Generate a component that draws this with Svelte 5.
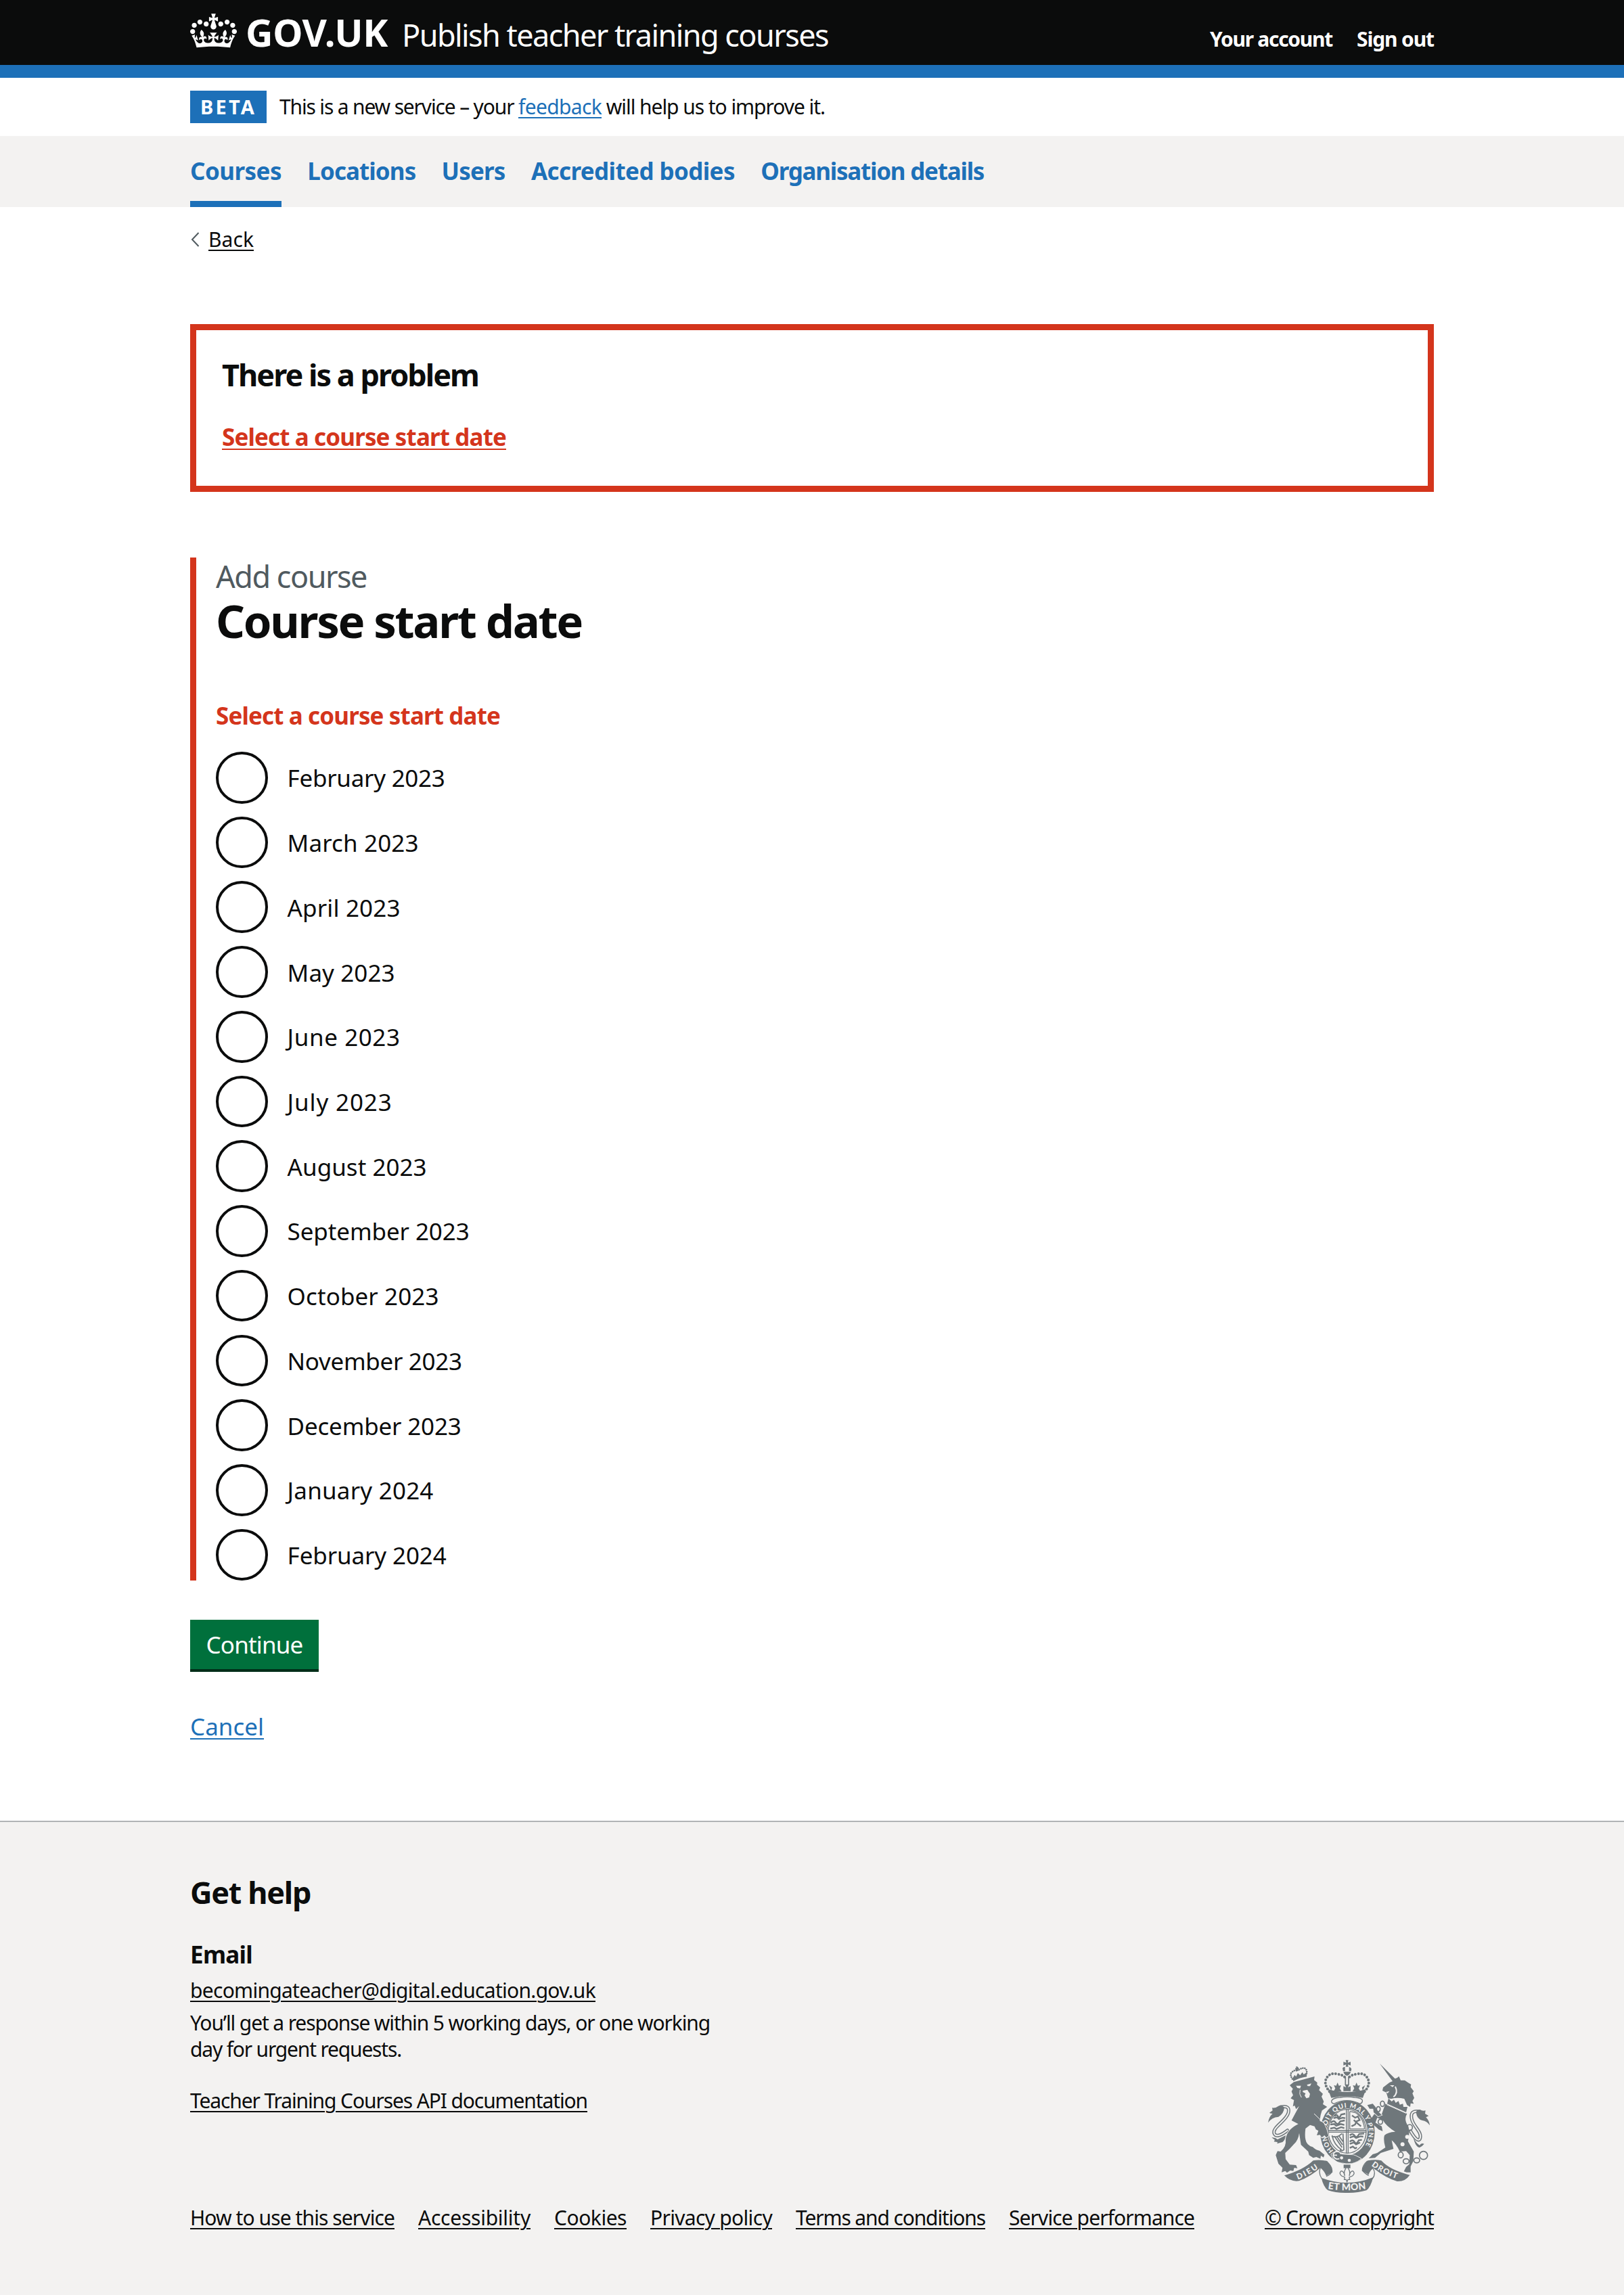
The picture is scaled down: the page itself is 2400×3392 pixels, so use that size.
<script>
  const navItems = [
    { label: 'Courses', width: 135, current: true },
    { label: 'Locations', width: 160 },
    { label: 'Users', width: 94 },
    { label: 'Accredited bodies', width: 301 },
    { label: 'Organisation details', width: 330 }
  ];

  const dates = [
    { label: 'February 2023', width: 233 },
    { label: 'March 2023', width: 194 },
    { label: 'April 2023', width: 167 },
    { label: 'May 2023', width: 159 },
    { label: 'June 2023', width: 167 },
    { label: 'July 2023', width: 155 },
    { label: 'August 2023', width: 206 },
    { label: 'September 2023', width: 269 },
    { label: 'October 2023', width: 224 },
    { label: 'November 2023', width: 258 },
    { label: 'December 2023', width: 257 },
    { label: 'January 2024', width: 216 },
    { label: 'February 2024', width: 235 }
  ];

  const footerLinks = [
    { label: 'How to use this service', width: 302 },
    { label: 'Accessibility', width: 166 },
    { label: 'Cookies', width: 107 },
    { label: 'Privacy policy', width: 180 },
    { label: 'Terms and conditions', width: 280 },
    { label: 'Service performance', width: 274 }
  ];

  // Tracks a line of text so that it occupies the given measure.
  function fit(node, width) {
    const natural = node.getBoundingClientRect().width;
    node.style.letterSpacing = `${(width - natural) / node.textContent.length}px`;
  }
</script>

<div class="page">
  <header class="header">
    <div class="container header-row">
      <svg class="crown" viewBox="0 0 132 97" aria-hidden="true">
        <path fill="#fff" fill-rule="evenodd" d="M25 30.2c3.5 1.5 7.7-.2 9.1-3.7 1.5-3.6-.2-7.8-3.9-9.2-3.6-1.4-7.6.3-9.1 3.9-1.4 3.5.3 7.5 3.9 9zM9 39.5c3.6 1.5 7.8-.2 9.2-3.7 1.5-3.6-.2-7.8-3.9-9.1-3.6-1.5-7.6.2-9.1 3.8-1.4 3.5.3 7.5 3.8 9zM4.4 57.2c3.5 1.5 7.7-.2 9.1-3.8 1.5-3.6-.2-7.7-3.9-9.1-3.5-1.5-7.6.3-9.1 3.8-1.4 3.5.3 7.6 3.9 9.1zm38.3-21.4c3.5 1.5 7.7-.2 9.1-3.8 1.5-3.6-.2-7.7-3.9-9.1-3.6-1.5-7.6.3-9.1 3.8-1.3 3.6.4 7.7 3.9 9.1zm64.4-5.6c-3.6 1.5-7.8-.2-9.1-3.7-1.5-3.6.2-7.8 3.8-9.2 3.6-1.4 7.7.3 9.2 3.9 1.3 3.5-.4 7.5-3.9 9zm15.9 9.3c-3.6 1.5-7.7-.2-9.1-3.7-1.5-3.6.2-7.8 3.7-9.1 3.6-1.5 7.7.2 9.2 3.8 1.5 3.5-.3 7.5-3.8 9zm4.7 17.7c-3.6 1.5-7.8-.2-9.2-3.8-1.5-3.6.2-7.7 3.9-9.1 3.6-1.5 7.7.3 9.2 3.8 1.3 3.5-.4 7.6-3.9 9.1zM89.3 35.8c-3.6 1.5-7.8-.2-9.2-3.8-1.4-3.6.2-7.7 3.9-9.1 3.6-1.5 7.7.3 9.2 3.8 1.4 3.6-.3 7.7-3.9 9.1zM69.7 17.7l8.9 4.7V9.3l-8.9 2.8c-.2-.3-.5-.6-.9-.9L72.4 0H59.6l3.5 11.2c-.3.3-.6.5-.9.9l-8.8-2.8v13.1l8.8-4.7c.3.3.6.7.9.9l-5 15.4v.1c-.2.8-.4 1.6-.4 2.4 0 4.1 3.1 7.5 7 8.1h.2c.3 0 .7.1 1 .1.4 0 .7 0 1-.1h.2c4-.6 7.1-4.1 7.1-8.1 0-.8-.1-1.7-.4-2.4V34l-5.1-15.4c.4-.2.7-.6 1-.9zM66 92.8c16.9 0 32.8 1.1 47.1 3.2 4-16.9 8.9-26.7 14-33.5l-9.6-3.4c1 4.9 1.1 7.2 0 10.2-1.5-1.4-3-4.3-4.2-8.7L108.6 76c2.8-2 5-3.2 7.5-3.3-4.4 9.4-10 11.9-13.6 11.2-4.3-.8-6.3-4.6-5.6-7.9 1-4.7 5.7-5.9 8-.5 4.3-8.7-3-11.4-7.6-8.8 7.1-7.2 7.9-13.5 2.1-21.1-8 6.1-8.1 12.3-4.5 20.8-4.7-5.4-12.1-2.5-9.5 6.2 3.4-5.2 7.9-2 7.2 3.1-.6 4.3-6.4 7.8-13.5 7.2-10.3-.9-10.9-8-11.2-13.8 2.5-.5 7.1 1.8 11 7.3L80.2 60c-4.1 4.4-8 5.3-12.3 5.4 1.4-4.4 8-11.6 8-11.6H55.5s6.4 7.2 7.9 11.6c-4.2-.1-8-1-12.3-5.4l1.4 16.4c3.9-5.5 8.5-7.7 10.9-7.3-.3 5.8-.9 12.8-11.1 13.8-7.2.6-12.9-2.9-13.5-7.2-.7-5 3.8-8.3 7.1-3.1 2.7-8.7-4.6-11.6-9.4-6.2 3.7-8.5 3.6-14.7-4.6-20.8-5.8 7.6-5 13.9 2.2 21.1-4.7-2.6-11.9.1-7.7 8.8 2.3-5.5 7.1-4.2 8.1.5.7 3.3-1.3 7.1-5.7 7.9-3.5.7-9-1.8-13.5-11.2 2.5.1 4.7 1.3 7.5 3.3l-4.7-15.4c-1.2 4.4-2.7 7.2-4.3 8.7-1.1-3-.9-5.3 0-10.2l-9.5 3.4c5 6.9 9.9 16.7 14 33.5 14.8-2.1 30.8-3.2 47.7-3.2z" />
      </svg>
      <span class="logotype" use:fit={210}>GOV.UK</span>
      <span class="product" use:fit={630}>Publish teacher training courses</span>
      <nav class="account">
        <a href="#account" use:fit={181}>Your account</a>
        <a href="#signout" use:fit={114}>Sign out</a>
      </nav>
    </div>
  </header>

  <div class="phase">
    <div class="container phase-row">
      <strong class="tag"><span use:fit={83}>BETA</span></strong>
      <p class="phase-text"><span use:fit={353}>This is a new service – your&nbsp;</span><a class="link blue" href="#feedback" use:fit={123}>feedback</a><span use:fit={330}>&nbsp;will help us to improve it.</span></p>
    </div>
  </div>

  <div class="nav">
    <nav class="container nav-row">
      {#each navItems as item}
        <a class="nav-link" class:current={item.current} href="#nav"><span use:fit={item.width}>{item.label}</span></a>
      {/each}
    </nav>
  </div>

  <main class="container main">
    <a class="back" href="#back">
      <svg class="chevron" viewBox="0 0 14 22" aria-hidden="true"><path d="M12.5 1 3 11l9.500 10" fill="none" stroke="#505a5f" stroke-width="2" /></svg>
      <span class="link" use:fit={67}>Back</span>
    </a>

    <section class="summary">
      <h2><span use:fit={379}>There is a problem</span></h2>
      <p><a class="link" href="#dates" use:fit={420}>Select a course start date</a></p>
    </section>

    <fieldset class="group">
      <p class="caption"><span use:fit={223}>Add course</span></p>
      <h1><span use:fit={541}>Course start date</span></h1>
      <p class="error"><span use:fit={420}>Select a course start date</span></p>
      <div class="radios" id="dates">
        {#each dates as date}
          <label class="radio">
            <input type="radio" name="start" />
            <span class="radio-label" use:fit={date.width}>{date.label}</span>
          </label>
        {/each}
      </div>
    </fieldset>

    <button class="button" type="button"><span use:fit={143}>Continue</span></button>
    <p class="cancel"><a class="link blue" href="#cancel" use:fit={109}>Cancel</a></p>
  </main>

  <footer class="footer">
    <div class="container footer-row">
      <div class="help">
        <h2><span use:fit={178}>Get help</span></h2>
        <h3><span use:fit={92}>Email</span></h3>
        <p class="mail"><a class="link" href="#mail" use:fit={599}>becomingateacher@digital.education.gov.uk</a></p>
        <p class="response">
          <span use:fit={768}>You’ll get a response within 5 working days, or one working</span><br />
          <span use:fit={312}>day for urgent requests.</span>
        </p>
        <p class="docs"><a class="link" href="#api" use:fit={587}>Teacher Training Courses API documentation</a></p>
        <nav class="meta">
          {#each footerLinks as item}
            <a class="link" href="#meta" use:fit={item.width}>{item.label}</a>
          {/each}
        </nav>
      </div>

      <div class="copyright">
        <svg class="arms" viewBox="57 60 750 600" aria-hidden="true">
          <defs>
            <path id="garter" d="M362 470A94 109 0 1 1 490 466" />
            <path id="dieu" d="M204 598Q262 576 312 534" />
            <path id="etmon" d="M337 639Q422 653 516 638" />
            <path id="droit" d="M530 536Q582 576 664 602" />
          </defs>

          <!-- tails -->
          <g fill="none" stroke-linecap="round">
            <path class="ink" stroke-width="15" d="M130 276Q170 268 162 302C152 340 86 368 100 396Q112 416 158 380" />
            <path class="paper" stroke-width="6" d="M130 276Q170 268 162 302C152 340 86 368 100 396Q112 416 158 380" />
            <path class="ink" stroke-width="15" d="M740 296Q700 290 709 330C716 364 760 390 744 420Q732 432 704 384" />
            <path class="paper" stroke-width="6" d="M740 296Q700 290 709 330C716 364 760 390 744 420Q732 432 704 384" />
          </g>
          <path class="fill" d="M72 346Q76 320 92 306Q80 304 78 302L92 292L90 280Q106 282 118 272Q132 264 144 278Q142 306 118 320Q88 322 72 346ZM88 412Q104 410 114 420L150 402Q148 424 136 432L112 439L114 432L98 430L102 422Z" />
          <path class="fill" d="M789 358Q786 336 772 322L784 316L768 306L770 292Q756 296 746 288Q732 286 728 300Q732 330 756 336Q776 338 789 358ZM764 440Q750 434 744 446Q730 440 716 412Q726 456 744 456Q756 450 764 440Z" />

          <!-- garter, shield and buckle -->
          <ellipse class="fill" cx="424" cy="388" rx="121" ry="140" />
          <ellipse class="light" cx="424" cy="386" rx="89" ry="103" />
          <ellipse class="line" cx="423" cy="384" rx="84" ry="97" stroke-width="4" />
          <path class="line" stroke-width="4" d="M419 286V482M427 286V482M338 381H508M338 388H508" />
          <g class="line" stroke-width="7">
            <path d="M366 318q10-12 16 0t14-8l18-4M362 326l16-4 8 8 16-6 12 2M350 346q14-14 22 0t20-6l20-4M348 354l18-2 8 8 20-8 16 4M348 372l18-4 10 6 20-8 14 4" />
            <path d="M434 402q14-12 22 2t20-8l22-2M434 412l18-6 10 8 20-8 12 2M434 430q14-12 22 2t18-8l14-2M434 440l18-6 10 8 18-8M434 458l14-6 10 8 8-4" />
            <path d="M444 314l14 10 12-6 8 16-14 6-6 14-16 8M472 352l12 10M452 334l20 18" />
          </g>
          <path class="line" stroke-width="4" d="M434 296v78h66M434 296l22 4q38 20 44 74" />
          <path class="line" stroke-width="5" d="M354 404q18 14 46-10M356 404q8 40 42 62M366 406l34 50M376 406l26 38M386 404l18 26M404 394l4 72q-10 8-18 0" />
          <text class="ring"><textPath href="#garter" textLength="470" lengthAdjust="spacing">HONI SOIT QUI MAL Y PENSE</textPath></text>
          <path class="fill halo" d="M352 486Q384 462 392 486L452 490Q476 500 484 506Q448 534 406 524Q366 524 352 486Z" />
          <path class="paperline" stroke-width="5" d="M388 476Q366 468 360 490Q366 512 388 506M360 490h18" />
          <circle class="light" cx="398" cy="502" r="7" /><circle class="light" cx="432" cy="513" r="7" />

          <!-- royal crown -->
          <path class="line dots" stroke-width="12" d="M344 208Q322 180 327 158Q340 122 376 130Q408 134 414 148M500 208Q524 180 517 158Q504 122 468 130Q436 134 430 148" />
          <path class="fill" d="M338 197Q380 210 422 210Q464 210 506 197L492 236Q422 222 352 236Z" />
          <path class="fill" d="M402 104Q408 96 413 100V118H431V100Q438 98 442 108Q438 134 422 138Q406 134 402 104ZM416 68H428L425 80L438 76V92L426 88L428 98H416L418 88L406 92V76L419 80Z" />
          <path class="paperline" stroke-width="3" d="M404 119H440M422 98V118" />
          <path class="line" stroke-width="5" d="M415 140V178M429 140V178" />
          <path class="fill" d="M380 168l6 14 10-2-6 14 8 14h-36l8-14-6-14 10 2ZM464 168l6 14 10-2-6 14 8 14h-36l8-14-6-14 10 2ZM412 176h20l-6 14 12-6v22h-32v-22l12 6ZM342 180l14 10-4 14ZM502 180l-14 10 4 14Z" />
          <path class="light edge" d="M364 262Q350 258 354 248Q360 236 390 234Q424 228 456 234Q486 236 490 246Q492 258 480 262Q450 248 422 248Q392 248 364 262Z" />

          <!-- lion -->
          <path class="fill halo" d="M168 180L186 166L278 141L276 157L290 168L289 178L303 190L298 202L315 218L309 230L319 252L315 264L334 276L311 292L305 312L301 338L318 346L330 372L340 404L330 412L322 402L310 412L302 400L288 402L295 382L284 376L278 362L258 356L238 372Q234 402 238 420Q242 446 270 454Q284 468 300 470L322 488L318 500L306 492L304 506L286 498L272 502L254 490L250 474L218 444L210 392Q206 424 186 442Q166 466 148 480L150 508L168 532L196 534L202 548L188 546L184 560L170 558L156 568L148 560L132 566L136 546L118 528L106 490L114 472L128 474Q154 452 150 420Q154 378 206 352L176 336L210 272L196 286L190 270L182 274L187 246L172 238L183 224L176 208L182 196Z" />
          <path class="light" d="M196 182L218 182L214 194L202 192ZM244 178L264 172L258 184L248 184ZM226 204L246 200L258 218L254 234L242 238L234 226L238 216L226 210Z" />
          <path class="paperline" stroke-width="3" d="M276 306Q306 336 338 364M214 200q-6 20 6 34" />
          <path class="line dots small" stroke-width="8" d="M180 152Q166 132 178 122Q190 110 200 116M240 138Q248 118 238 106Q224 100 208 112" />
          <path class="fill" d="M180 150L190 134L196 142L204 126L214 136L224 122L230 132L242 124L243 142Q214 146 184 162ZM196 96l8 2 2 18-8 2ZM192 104l16-3v8l-15 2Z" />

          <!-- unicorn -->
          <path class="fill halo" d="M567 84L634 150Q642 152 652 140L660 158L678 158L692 168L706 176L704 188L718 206L712 216L720 236L712 250L718 262L704 260L702 276L688 268L676 240Q646 232 618 240L604 238L596 212L579 204L582 190L610 168L624 162Z" />
          <path class="fill" d="M592 262L688 306Q672 334 694 362Q702 392 692 428L718 474L716 516L704 540L704 566L686 566L674 562L684 542L698 530L700 490L684 472L656 474Q640 440 620 424L628 462L572 480L546 502L518 504L536 486L556 480L592 456Q582 422 588 402Q602 388 636 386Q596 362 582 336L556 324L548 346L576 362L580 384L562 376L532 348L530 326L544 306L558 312L576 308Z" />
          <path class="fill halo" d="M512 268L536 262L548 276L560 296L576 312L560 318L540 300L538 284L522 284Z" />
          <path class="light" d="M612 180l20 0-8 8ZM594 210l16-4-8 10Z" />
          <path class="paperline" stroke-width="6" d="M636 186Q650 214 628 232" />
          <path class="fill" d="M606 238L620 252L630 244L638 258L650 250L656 266L670 262L672 276L690 276L684 300L600 262Z" />
          <path class="paperline" stroke-width="3" d="M598 266L684 304" />
          <g class="chain">
            <ellipse cx="579" cy="262" rx="9" ry="12" /><ellipse cx="561" cy="286" rx="8" ry="11" />
            <ellipse cx="570" cy="342" rx="10" ry="11" /><ellipse cx="700" cy="367" rx="12" ry="13" />
            <ellipse cx="660" cy="489" rx="11" ry="13" /><ellipse cx="684" cy="517" rx="13" ry="11" />
            <ellipse cx="731" cy="513" rx="13" ry="11" /><circle cx="761" cy="491" r="18" />
          </g>
          <circle class="light" cx="689" cy="409" r="9" /><circle class="light" cx="668" cy="442" r="9" />

          <!-- motto scroll -->
          <path class="fill" d="M144 580Q228 556 272 514Q300 508 334 516Q356 540 358 566Q344 572 330 582Q322 560 304 546Q262 584 210 604Q172 610 144 580Z" />
          <path class="fill" d="M700 578Q612 556 574 514Q548 508 514 514Q492 538 488 560Q502 566 518 576Q524 556 540 548Q590 590 644 606Q680 608 700 578Z" />
          <path class="line" stroke-width="4" d="M326 516Q356 534 356 560Q350 576 330 584M304 546Q294 570 310 594M512 516Q490 536 490 556Q498 570 518 580M538 550Q552 572 534 596" />
          <path class="fill" d="M308 590Q364 612 422 612Q480 612 538 588Q526 634 508 646Q470 658 422 657Q370 658 338 646Q318 632 308 590Z" />
          <text class="motto"><textPath href="#dieu" textLength="104" lengthAdjust="spacing">DIEU</textPath></text>
          <text class="motto large"><textPath href="#etmon" textLength="170" lengthAdjust="spacing">ET MON</textPath></text>
          <text class="motto"><textPath href="#droit" textLength="126" lengthAdjust="spacing">DROIT</textPath></text>

          <!-- fleur-de-lis -->
          <path class="fill" d="M407 532h30v16h-30Z" />
          <path class="light edge" d="M422 542Q440 562 432 582Q436 560 448 560Q460 570 446 582L432 588L434 598H426L422 608L418 598H410L412 588L398 582Q384 570 396 560Q408 560 412 582Q404 562 422 542Z" />
        </svg>
        <a class="link" href="#copyright" use:fit={250}>© Crown copyright</a>
      </div>
    </div>
  </footer>
</div>

<style>
  :global(body) {
    margin: 0;
    background: #fff;
  }

  .page {
    display: flex;
    flex-direction: column;
    min-height: 3392px;
    color: #0b0c0c;
    font-family: 'Noto Sans', 'Open Sans', sans-serif;
    font-size: 30px;
    line-height: 38px;
    white-space: nowrap;
  }

  h1, h2, h3, p {
    margin: 0;
  }

  a {
    color: inherit;
    text-decoration: none;
  }

  .link {
    text-decoration: underline;
    text-decoration-thickness: 2px;
    text-underline-offset: 3.500px;
  }

  .blue {
    color: #1d70b8;
  }

  .container {
    box-sizing: border-box;
    width: 1838px;
    margin: 0 auto;
  }

  .header {
    box-sizing: border-box;
    height: 115px;
    border-bottom: 19px solid #1d70b8;
    background: #0b0c0c;
    color: #fff;
  }

  .header-row {
    display: flex;
    align-items: baseline;
    padding-top: 17px;
  }

  .crown {
    align-self: flex-start;
    width: 69px;
    height: 51px;
    margin-top: 3px;
  }

  .logotype {
    margin-left: 13px;
    font-size: 56px;
    font-weight: 700;
    line-height: 60px;
  }

  .product {
    margin-left: 21px;
    font-size: 45px;
    line-height: 58px;
  }

  .account {
    display: flex;
    gap: 36px;
    margin-left: auto;
    font-weight: 700;
  }

  .phase {
    height: 86px;
  }

  .phase-row {
    display: flex;
    align-items: baseline;
    gap: 19px;
    padding-top: 19px;
  }

  .tag {
    box-sizing: border-box;
    width: 113px;
    padding-left: 15px;
    background: #1d70b8;
    color: #fff;
    font-size: 29px;
    line-height: 48px;
  }

  .nav {
    background: #f3f2f1;
  }

  .nav-row {
    display: flex;
    gap: 38.300px;
  }

  .nav-link {
    box-sizing: border-box;
    height: 105px;
    padding-top: 28px;
    border-bottom: 9px solid transparent;
    color: #1d70b8;
    font-size: 35px;
    font-weight: 700;
    line-height: 48px;
  }

  .current {
    border-color: #1d70b8;
  }

  .main {
    font-size: 35px;
    line-height: 48px;
  }

  .back {
    display: flex;
    align-items: center;
    gap: 13px;
    margin-top: 29px;
    font-size: 30px;
    line-height: 38px;
  }

  .chevron {
    width: 14px;
    height: 22px;
  }

  .summary {
    box-sizing: border-box;
    height: 248px;
    margin-top: 106px;
    padding: 37px 38px;
    border: 9.500px solid #d4351c;
  }

  .summary h2 {
    font-size: 45px;
    line-height: 58px;
  }

  .summary p {
    margin-top: 39px;
    color: #d4351c;
    font-weight: 700;
  }

  .group {
    min-width: 0;
    margin: 97px 0 0;
    padding: 0 0 0 29px;
    border: 0;
    border-left: 9.500px solid #d4351c;
  }

  .caption {
    padding-top: 1px;
    color: #505a5f;
    font-size: 45px;
    line-height: 53px;
  }

  h1 {
    margin-top: 3px;
    font-size: 67px;
    line-height: 72px;
  }

  .error {
    margin-top: 81px;
    color: #d4351c;
    font-weight: 700;
  }

  .radios {
    display: flex;
    flex-direction: column;
    gap: 19.150px;
    margin-top: 29px;
  }

  .radio {
    display: flex;
    align-items: center;
    gap: 29px;
    height: 76.600px;
  }

  .radio-label {
    padding-top: 2px;
  }

  .radio input {
    box-sizing: border-box;
    width: 76.600px;
    height: 76.600px;
    margin: 0;
    border: 4px solid #0b0c0c;
    border-radius: 50%;
    appearance: none;
  }

  .button {
    display: block;
    width: 190px;
    height: 73px;
    margin: 58px 0 0;
    padding: 0;
    border: 0;
    background: #00703c;
    box-shadow: 0 4px 0 #002d18;
    color: #fff;
    font: inherit;
    line-height: 73px;
  }

  .cancel {
    margin-top: 61px;
  }

  .footer {
    flex: 1;
    margin-top: 115px;
    border-top: 2px solid #b1b4b6;
    background: #f3f2f1;
  }

  .footer-row {
    display: flex;
    align-items: flex-end;
    justify-content: space-between;
    padding-top: 75px;
  }

  .footer h2 {
    font-size: 45px;
    line-height: 58px;
  }

  .footer h3 {
    margin-top: 39px;
    font-size: 35px;
    line-height: 48px;
  }

  .mail {
    margin-top: 10px;
  }

  .response {
    margin-top: 10px;
    line-height: 38.500px;
  }

  .docs {
    margin-top: 38px;
  }

  .meta {
    display: flex;
    gap: 35px;
    margin-top: 135px;
  }

  .copyright {
    display: flex;
    flex-direction: column;
    align-items: flex-start;
    gap: 17px;
    width: 250px;
  }

  .arms {
    width: 250px;
    height: 200px;
    overflow: visible;
  }

  .fill {
    fill: #6f777b;
  }

  .light {
    fill: #f3f2f1;
  }

  .halo {
    stroke: #f3f2f1;
    stroke-width: 5px;
    paint-order: stroke;
  }

  .ink {
    stroke: #6f777b;
  }

  .paper {
    stroke: #f3f2f1;
  }

  .line {
    fill: none;
    stroke: #6f777b;
  }

  .paperline {
    fill: none;
    stroke: #f3f2f1;
  }

  .dots {
    stroke-dasharray: 0.1 14;
    stroke-linecap: round;
  }

  .small {
    stroke-dasharray: 0.1 9;
  }

  .edge {
    stroke: #6f777b;
    stroke-width: 4px;
  }

  .chain {
    fill: none;
    stroke: #6f777b;
    stroke-width: 5px;
  }

  .ring,
  .motto {
    fill: #f3f2f1;
    font-family: Lato, sans-serif;
    font-size: 29px;
    font-weight: 900;
  }

  .motto {
    font-size: 35px;
  }

  .large {
    font-size: 42px;
  }
</style>
